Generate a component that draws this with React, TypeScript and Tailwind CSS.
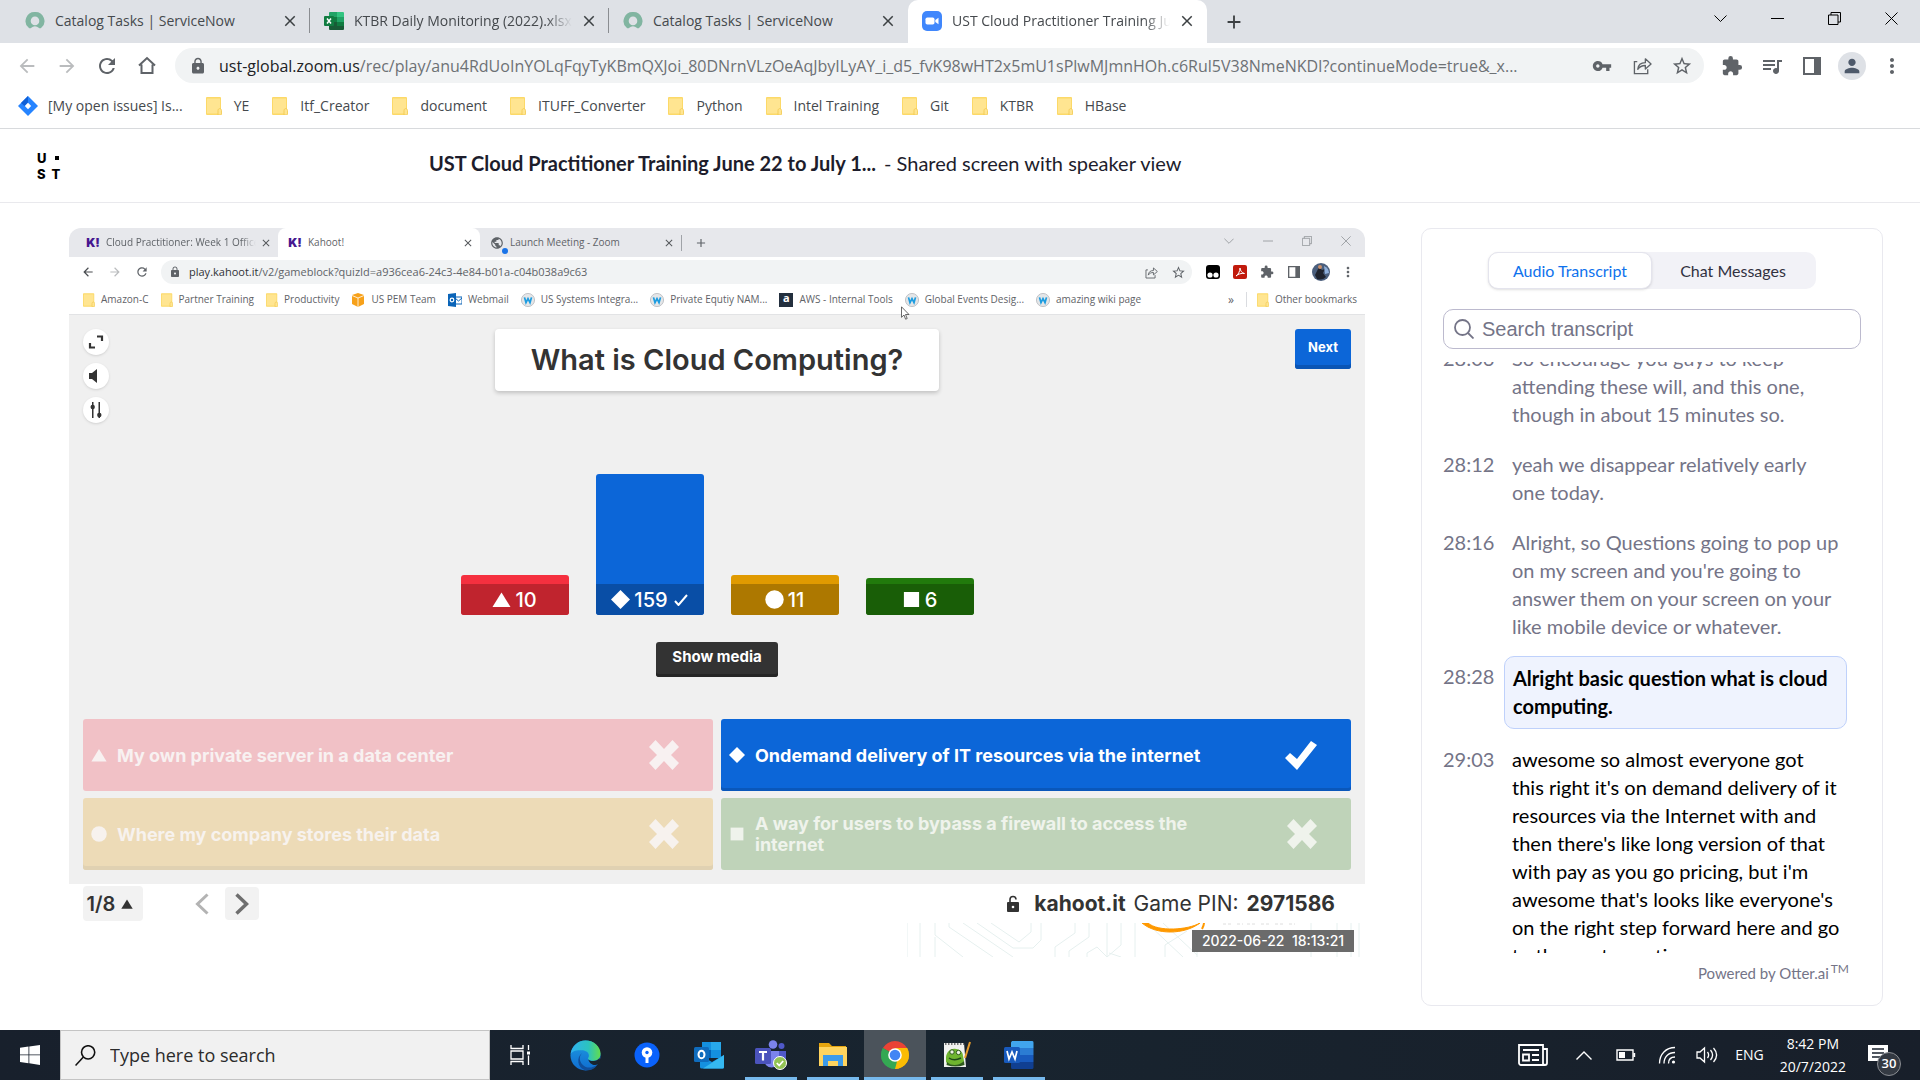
import React from "react";
import {
  MdVpnKey, MdExtension, MdQueueMusic, MdLock, MdPerson, MdMoreVert, MdRefresh,
  MdStarBorder, MdArrowBack, MdArrowForward, MdPublic, MdClose, MdAdd,
} from "react-icons/md";

const ui = "font-['Open_Sans','Noto_Sans',sans-serif]";
const round = "font-['Inter',sans-serif]";

function ServiceNow() {
  return (
    <svg viewBox="0 0 20 20" className="size-5 shrink-0">
      <path d="M10 1a9 9 0 0 0-6.300 15.800c.8.8 1.800.7 2.600 0a5.200 5.200 0 0 1 7.400 0c.8.7 1.800.800 2.600 0A9 9 0 0 0 10 1Zm0 13.200a4.300 4.300 0 1 1 0-8.600 4.300 4.300 0 0 1 0 8.600Z" fill="#81b5a1" />
    </svg>
  );
}

function Excel() {
  return (
    <svg viewBox="0 0 20 20" className="size-5 shrink-0">
      <path d="M6 1h7v9H5V2a1 1 0 0 1 1-1Z" fill="#21a366" />
      <path d="M13 1h6a1 1 0 0 1 1 1v4h-7Z" fill="#33c481" />
      <path d="M5 6h8v5H5Z" fill="#107c41" />
      <path d="M13 6h7v5h-7Z" fill="#21a366" />
      <path d="M5 11h15v7a1 1 0 0 1-1 1H6a1 1 0 0 1-1-1Z" fill="#185c37" />
      <path d="M13 11h7v4h-7Z" fill="#107c41" />
      <rect y="5" width="10" height="10" rx="1" fill="#107c41" />
      <path d="m3 7.500 4 5m0-5-4 5" stroke="#fff" strokeWidth="1.500" />
    </svg>
  );
}

function ZoomLogo() {
  return (
    <svg viewBox="0 0 20 20" className="size-5 shrink-0">
      <rect width="20" height="20" rx="5" fill="#4087fc" />
      <rect x="3.500" y="6.500" width="9" height="7" rx="1.800" fill="#fff" />
      <path d="m13.300 9 3.200-2.300v6.600L13.300 11Z" fill="#fff" />
    </svg>
  );
}

function Folder({ small = false }: { small?: boolean }) {
  return (
    <svg viewBox="0 0 16 18" className={small ? "h-3.5 w-3 shrink-0" : "h-[18px] w-4 shrink-0"}>
      <rect width="15" height="18" rx="1" fill="#fcd968" />
      <path d="M1 1.500h13v15H1Z" fill="#ffe591" />
      <path d="M12 18v-4.500c0-2.500 3.500-2.500 3.500 0V17c0 .6-.4 1-1 1Z" fill="#ffe591" stroke="#f1c84b" strokeWidth=".8" />
    </svg>
  );
}

function ShareIcon({ className }: { className: string }) {
  return (
    <svg viewBox="0 0 20 20" className={className} fill="none" stroke="currentColor" strokeWidth="1.400">
      <path d="M4.500 6H1.500v12.500h14V14" />
      <path d="M5 14c.4-4.500 3-7 8-7V3l6 5.500-6 5.200V10c-3.500 0-6 1-8 4Z" strokeLinejoin="round" />
    </svg>
  );
}

function SidePanel({ className }: { className: string }) {
  return (
    <svg viewBox="0 0 18 18" className={className}>
      <path d="M1 1h16v16H1Z" fill="none" stroke="currentColor" strokeWidth="2" />
      <path d="M11 1h6v16h-6Z" fill="currentColor" />
    </svg>
  );
}

function WinControls({ small = false }: { small?: boolean }) {
  const btn = small ? "flex h-[26px] w-[39px] items-center justify-center" : "flex h-9 w-[57px] items-center justify-center";
  const size = small ? "size-2.5" : "size-[13px]";
  const p = { className: size, viewBox: "0 0 13 13", fill: "none", stroke: "currentColor" };
  return (
    <div className={small ? "ml-auto flex text-[#8b8e93]" : "ml-auto flex text-black"}>
      <button aria-label="Search tabs" className={btn}><svg {...p}><path d="m.5 3.500 6 6 6-6" /></svg></button>
      <button aria-label="Minimize" className={btn}><svg {...p}><path d="M0 6.500h13" /></svg></button>
      <button aria-label="Restore" className={btn}><svg {...p}><path d="M.5 3h9.500v9.500H.5ZM3 3V.5h9.500V10H10" /></svg></button>
      <button aria-label="Close" className={btn}><svg {...p}><path d="m.5.5 12 12m0-12-12 12" /></svg></button>
    </div>
  );
}

function Tab({ icon, title, fade, active, divider }: { icon: React.ReactNode; title: string; fade?: boolean; active?: boolean; divider?: boolean }) {
  return (
    <div className={active ? "flex w-[299px] items-center rounded-t-[10px] bg-white pb-0.5 pl-3.5" : "flex w-[299px] items-center pb-0.5 pl-3.5"}>
      {icon}
      <button className={fade
        ? "ml-2.5 w-[218px] overflow-hidden whitespace-nowrap text-left [mask-image:linear-gradient(to_right,black_88%,transparent)]"
        : "ml-2.5 w-[218px] overflow-hidden whitespace-nowrap text-left"}>{title}</button>
      <button aria-label={"Close " + title} className="ml-2"><MdClose className="size-[18px] text-[#3c4043]" /></button>
      {divider && <span className="ml-auto h-[25px] w-px bg-[#8a8d91]" />}
    </div>
  );
}

const bookmarks = ["YE", "Itf_Creator", "document", "ITUFF_Converter", "Python", "Intel Training", "Git", "KTBR", "HBase"];

const cell = "flex w-10 shrink-0 items-center justify-center";

function Browser() {
  return (
    <header className={"shrink-0 " + ui}>
      <div className="flex h-[43px] bg-[#dee1e6] pl-[11px] text-sm text-[#45494d]">
        <Tab icon={<ServiceNow />} title="Catalog Tasks | ServiceNow" divider />
        <Tab icon={<Excel />} title="KTBR Daily Monitoring (2022).xlsx" fade divider />
        <Tab icon={<ServiceNow />} title="Catalog Tasks | ServiceNow" />
        <Tab icon={<ZoomLogo />} title="UST Cloud Practitioner Training June" fade active />
        <button aria-label="New tab" className="ml-4"><MdAdd className="size-[22px] text-[#3c4043]" /></button>
        <WinControls />
      </div>
      <div className="flex h-[45px] items-center bg-white pr-2 pl-[7px] text-[#5f6368]">
        <button aria-label="Back" className={cell}><MdArrowBack className="size-[22px] text-[#babcbe]" /></button>
        <button aria-label="Forward" className={cell}><MdArrowForward className="size-[22px] text-[#babcbe]" /></button>
        <button aria-label="Reload" className={cell}><MdRefresh className="size-6" /></button>
        <button aria-label="Home" className={cell}>
          <svg viewBox="0 0 20 20" className="size-5" fill="none" stroke="currentColor" strokeWidth="2"><path d="M2 9.500 10 2l8 7.500M4.500 8.500V17h11V8.500" /></svg>
        </button>
        <div className="ml-2 flex h-[35px] min-w-0 flex-1 items-center rounded-full bg-[#f1f3f4] pr-0.5 pl-3.5">
          <MdLock className="size-[18px] shrink-0" />
          <div className="ml-3 min-w-0 flex-1 truncate text-base text-[#6d7175]">
            <span className="text-[#202124]">ust-global.zoom.us</span>/rec/play/anu4RdUoInYOLqFqyTyKBmQXJoi_80DNrnVLzOeAqJbyILyAY_i_d5_fvK98wHT2x5mU1sPlwMJmnHOh.c6Rul5V38NmeNKDI?continueMode=true&amp;_x...
          </div>
          <button aria-label="Passwords" className={cell}><MdVpnKey className="size-5" /></button>
          <button aria-label="Share" className={cell}><ShareIcon className="size-[19px]" /></button>
          <button aria-label="Bookmark" className={cell}><MdStarBorder className="size-[22px]" /></button>
        </div>
        <div className="ml-2 flex items-center">
          <button aria-label="Extensions" className={cell}><MdExtension className="size-[22px]" /></button>
          <button aria-label="Media" className={cell}><MdQueueMusic className="size-6" /></button>
          <button aria-label="Side panel" className={cell}><SidePanel className="size-[18px]" /></button>
          <button aria-label="Profile" className={cell}><span className="flex size-7 items-center justify-center rounded-full bg-[#dee1e6]"><MdPerson className="size-[22px] text-[#4e5a6b]" /></span></button>
          <button aria-label="Menu" className={cell}><MdMoreVert className="size-6" /></button>
        </div>
      </div>
      <nav className="flex h-[41px] items-center gap-[23px] border-b border-[#d8dadd] bg-white pb-1 pl-[18px] text-sm text-[#45494d]">
        <a href="#jira" className="flex items-center gap-2.5 whitespace-nowrap">
          <svg viewBox="0 0 20 20" className="size-5"><path d="M10 0 20 10 10 20 0 10Z" fill="#2684ff" /><path d="M10 0v6.500L6.500 10 3 7Z" fill="#0f5fd6" /><path d="M10 6.800 13.200 10 10 13.200 6.800 10Z" fill="#fff" /></svg>
          [My open issues] Is...
        </a>
        {bookmarks.map((b) => (
          <a key={b} href={"#" + b} className="flex items-center gap-3 whitespace-nowrap"><Folder />{b}</a>
        ))}
      </nav>
    </header>
  );
}

function KahootMark() {
  return <span className="w-3.5 text-center font-['Inter'] text-xs font-black text-[#46178f]">K!</span>;
}

function SmallTab({ icon, title, active, fade, divider }: { icon: React.ReactNode; title: string; active?: boolean; fade?: boolean; divider?: boolean }) {
  return (
    <div className={active ? "flex w-[202px] items-center rounded-t-lg bg-white pl-2.5" : "flex w-[202px] items-center pl-2.5"}>
      {icon}
      <button className={fade
        ? "ml-1.5 flex-1 overflow-hidden whitespace-nowrap text-left [mask-image:linear-gradient(to_right,black_90%,transparent)]"
        : "ml-1.5 flex-1 overflow-hidden whitespace-nowrap text-left"}>{title}</button>
      <button aria-label={"Close " + title} className="ml-1 mr-1.5"><MdClose className="size-3 text-[#55585c]" /></button>
      {divider && <span className="h-4 w-px bg-[#a0a3a8]" />}
    </div>
  );
}

function Wiki() {
  return (
    <svg viewBox="0 0 16 16" className="size-3.5 shrink-0">
      <circle cx="8" cy="8" r="7.500" fill="#e4e6e8" stroke="#b9bcc0" />
      <path d="m4 5 1.700 6L8 6.500l2.300 4.500L12 5" fill="none" stroke="#1c9ce0" strokeWidth="2" />
    </svg>
  );
}

const smallBookmarks: { label: string; icon: React.ReactNode }[] = [
  { label: "Amazon-C", icon: <Folder small /> },
  { label: "Partner Training", icon: <Folder small /> },
  { label: "Productivity", icon: <Folder small /> },
  { label: "US PEM Team", icon: <svg viewBox="0 0 14 14" className="size-3.5"><path d="m7 0 6 2v9l-6 3-6-3V2Z" fill="#f7a11a" /><path d="M1 2.500 7 5l6-2.500M7 5v9" stroke="#fff" strokeWidth=".8" fill="none" /></svg> },
  { label: "Webmail", icon: <svg viewBox="0 0 14 14" className="size-3.5"><path d="M7 4h7v7H7Z" fill="#fff" stroke="#0a64b8" /><path d="m7 5 3.500 3L14 5" stroke="#0a64b8" fill="none" /><path d="m0 1 8-1v14l-8-1Z" fill="#0a64b8" /><circle cx="4" cy="7" r="1.800" fill="none" stroke="#fff" strokeWidth="1.200" /></svg> },
  { label: "US Systems Integra...", icon: <Wiki /> },
  { label: "Private Equtiy NAM...", icon: <Wiki /> },
  { label: "AWS - Internal Tools", icon: <span className="flex size-3.5 items-center justify-center bg-[#232f3e] pb-0.5 text-[11px] font-bold text-white">a</span> },
  { label: "Global Events Desig...", icon: <Wiki /> },
  { label: "amazing wiki page", icon: <Wiki /> },
];

const smallCell = "flex w-[27px] shrink-0 items-center justify-center";

function SharedBrowser() {
  return (
    <div className={ui + " text-[#5f6368]"}>
      <div className="flex h-[29px] rounded-t-xl bg-[#e7e8ec] pl-[7px] text-[10px]">
        <SmallTab icon={<KahootMark />} title="Cloud Practitioner: Week 1 Office" fade />
        <SmallTab icon={<KahootMark />} title="Kahoot!" active />
        <SmallTab icon={<span className="relative"><MdPublic className="size-3.5" /><span className="absolute -right-1 -bottom-1 size-1.5 rounded-full bg-[#1a73e8]" /></span>} title="Launch Meeting - Zoom" divider />
        <button aria-label="New tab" className="ml-3"><MdAdd className="size-3.5" /></button>
        <WinControls small />
      </div>
      <div className="flex h-[30px] items-center bg-white pr-1 pl-[5px]">
        <button aria-label="Back" className={smallCell}><MdArrowBack className="size-3.5 text-[#4a4d51]" /></button>
        <button aria-label="Forward" className={smallCell}><MdArrowForward className="size-3.5 text-[#babcbe]" /></button>
        <button aria-label="Reload" className={smallCell}><MdRefresh className="size-3.5" /></button>
        <div className="ml-1.5 flex h-6 min-w-0 flex-1 items-center rounded-full bg-[#f1f3f4] pl-2">
          <MdLock className="size-3" />
          <span className="ml-2 text-[11px]"><span className="text-[#303236]">play.kahoot.it</span>/v2/gameblock?quizId=a936cea6-24c3-4e84-b01a-c04b038a9c63</span>
          <button aria-label="Share" className={"ml-auto " + smallCell}><ShareIcon className="size-[13px]" /></button>
          <button aria-label="Bookmark" className={smallCell}><MdStarBorder className="size-[15px]" /></button>
        </div>
        <div className="ml-[7px] flex items-center">
          <span className={smallCell}><svg viewBox="0 0 14 14" className="size-3.5"><rect width="14" height="14" rx="3" fill="#000" /><circle cx="4" cy="10" r="2.600" fill="#fff" /><circle cx="10" cy="10" r="2.600" fill="#fff" /></svg></span>
          <span className={smallCell}><svg viewBox="0 0 14 14" className="size-3.5"><rect width="14" height="14" rx="2" fill="#c11a0c" /><path d="M3 11c2-1 4-4.500 4-8 .3 3 2 5 4.500 5.500C8.500 8 5 9 3 11Z" fill="none" stroke="#fff" /></svg></span>
          <span className={smallCell}><MdExtension className="size-3.5" /></span>
          <span className={smallCell}><SidePanel className="size-3" /></span>
          <span className={smallCell}><svg viewBox="0 0 18 18" className="size-[18px]"><circle cx="9" cy="9" r="9" fill="#4b5f7d" /><path d="M3 12 7 4l3 3 3-1-2 4 3 4a9 9 0 0 1-9 2Z" fill="#20242e" /><circle cx="8" cy="4" r="2" fill="#c98f6b" /><path d="M12 3a8 8 0 0 1 5 7l-4 1Z" fill="#8fb0dc" /></svg></span>
          <span className={smallCell}><MdMoreVert className="size-4" /></span>
        </div>
      </div>
      <nav className="flex h-7 items-center gap-3 border-b border-[#e2e3e5] bg-white px-3.5 pb-0.5 text-[10px]">
        {smallBookmarks.map((b) => (
          <a key={b.label} href="#bookmark" className="flex items-center gap-1.5 whitespace-nowrap">{b.icon}{b.label}</a>
        ))}
        <span className="ml-auto text-xs">»</span>
        <a href="#other" className="-mr-1.5 flex items-center gap-1.5 border-l border-[#dadce0] pl-2.5"><Folder small />Other bookmarks</a>
      </nav>
    </div>
  );
}

type Shape = "triangle" | "diamond" | "circle" | "square";

function ShapeIcon({ shape, className }: { shape: Shape; className: string }) {
  return (
    <svg viewBox="0 0 20 20" className={className} fill="currentColor">
      {shape === "triangle" && <path d="M10 2.500 19.500 18H.5Z" />}
      {shape === "diamond" && <path d="M10 0 20 10 10 20 0 10Z" />}
      {shape === "circle" && <circle cx="10" cy="10" r="9.700" />}
      {shape === "square" && <path d="M2 2h16v16H2Z" />}
    </svg>
  );
}

const bars: { shape: Shape; n: number; box: string; foot: string; ok?: boolean }[] = [
  { shape: "triangle", n: 10, box: "h-10 bg-[#f5303f]", foot: "bg-[#c0242e]" },
  { shape: "diamond", n: 159, box: "h-[141px] bg-[#0c66d8]", foot: "bg-[#094ea6]", ok: true },
  { shape: "circle", n: 11, box: "h-10 bg-[#e09a00]", foot: "bg-[#ad7800]" },
  { shape: "square", n: 6, box: "h-[37px] bg-[#217a0c]", foot: "bg-[#195e07]" },
];

const answers: { shape: Shape; text: string; cls: string; ok?: boolean }[] = [
  { shape: "triangle", text: "My own private server in a data center", cls: "bg-[#f1c1c6] text-[#f8f1f1]" },
  { shape: "diamond", text: "Ondemand delivery of IT resources via the internet", cls: "bg-[#0c66d8] text-white shadow-[inset_0_-3px_0_#0a57ba]", ok: true },
  { shape: "circle", text: "Where my company stores their data", cls: "bg-[#eddbb7] text-[#f7f2ee] shadow-[inset_0_-4px_0_#e0d1b2]" },
  { shape: "square", text: "A way for users to bypass a firewall to access the internet", cls: "bg-[#bfd3b9] text-[#eff3ec]" },
];

function Quiz() {
  const round26 = "flex size-[26px] items-center justify-center rounded-full bg-white text-[#333] shadow-sm";
  return (
    <section className={"bg-[#f0f0f0] p-3.5 " + round}>
      <div className="grid grid-cols-[1fr_auto_1fr] items-start">
        <div className="flex flex-col gap-2">
          <button aria-label="Full screen" className={round26}><svg viewBox="0 0 16 16" className="size-4" fill="none" stroke="currentColor" strokeWidth="2.200"><path d="M9 2.500h5V7M7 13.500H2V9" /></svg></button>
          <button aria-label="Sound" className={round26}><svg viewBox="0 0 16 16" className="size-4" fill="currentColor"><path d="M1 5h3l5-4v14l-5-4H1Z" /></svg></button>
          <button aria-label="Settings" className={round26}><svg viewBox="0 0 16 16" className="size-4" fill="currentColor"><path d="M4 0h1.500v16H4ZM10.500 0H12v16h-1.500Z" /><circle cx="4.700" cy="5" r="2.200" /><circle cx="11.300" cy="13" r="2.200" /></svg></button>
        </div>
        <h1 className="flex h-[62px] items-center rounded-sm bg-white px-9 text-[29px] font-semibold text-[#333] shadow-[0_2px_4px_rgba(0,0,0,0.2)]">What is Cloud Computing?</h1>
        <button className="h-10 w-14 justify-self-end rounded-[3px] bg-[#0c66d8] pb-0.5 text-[13px] font-bold text-white shadow-[inset_0_-4px_0_#0a55b5]">Next</button>
      </div>
      <div className="flex h-48 items-end justify-center gap-[27px]">
        {bars.map((b) => (
          <div key={b.n} className={"flex w-[108px] flex-col justify-end overflow-hidden rounded-[3px] " + b.box}>
            <div className={"flex h-[31px] items-center justify-center gap-1 text-xl font-medium text-white " + b.foot}>
              <ShapeIcon shape={b.shape} className="size-[19px]" />{b.n}
              {b.ok && <svg viewBox="0 0 14 12" className="ml-0.5 h-3 w-3.5" fill="none" stroke="currentColor" strokeWidth="2"><path d="m1 7 3.500 4L13 1" /></svg>}
            </div>
          </div>
        ))}
      </div>
      <div className="mt-[27px] flex justify-center">
        <button className="h-[35px] w-[122px] rounded-[3px] bg-[#333] pb-1 text-[15px] font-bold text-white shadow-[inset_0_-3px_0_#262626]">Show media</button>
      </div>
      <div className="mt-[42px] grid grid-cols-2 gap-x-2 gap-y-[7px]">
        {answers.map((a) => (
          <button key={a.shape} className={"flex h-[72px] items-center rounded-[3px] pl-2 pr-[34px] text-left text-[18px] leading-[21px] font-bold " + a.cls}>
            <ShapeIcon shape={a.shape} className="size-4 shrink-0" />
            <span className="ml-2.5 flex-1 pr-14">{a.text}</span>
            {a.ok ? (
              <svg viewBox="0 0 32 30" className="h-[30px] w-8 shrink-0" fill="currentColor"><path d="m0 18 5-5 7 6L26 1l6 4-20 25Z" /></svg>
            ) : (
              <svg viewBox="0 0 30 30" className="size-[30px] shrink-0" fill="currentColor"><path d="m6.500 0 8.500 9L23.500 0 30 7l-8 8 8 8-6.500 7-8.500-9-8.500 9L0 23l8-8-8-8Z" /></svg>
            )}
          </button>
        ))}
      </div>
    </section>
  );
}

function QuizFooter() {
  return (
    <div className={"flex h-[39px] items-center bg-white px-3.5 text-[21px] text-[#333] " + round}>
      <button className="flex h-[35px] w-[60px] items-center justify-center gap-1.5 rounded-sm bg-[#f2f2f2] pr-1.5 text-xl font-semibold">1/8<ShapeIcon shape="triangle" className="size-3 shrink-0" /></button>
      <button aria-label="Previous" className="ml-[52px] text-[#b3b3b3]"><svg viewBox="0 0 14 22" className="h-[22px] w-3.5" fill="none" stroke="currentColor" strokeWidth="3"><path d="M12.500 1.500 2.500 11l10 9.500" /></svg></button>
      <button aria-label="Following" className="ml-4 flex h-[33px] w-[34px] items-center justify-center rounded-sm bg-[#f2f2f2] text-[#6e6e6e]"><svg viewBox="0 0 14 22" className="h-[22px] w-3.5" fill="none" stroke="currentColor" strokeWidth="3.500"><path d="m1.500 1.500 10 9.500-10 9.500" /></svg></button>
      <p className="mr-4 ml-auto flex items-center">
        <svg viewBox="0 0 12 17" className="mr-[15px] h-[17px] w-3"><path d="M3 8V4.500a3 3 0 0 1 6 0" fill="none" stroke="#333" strokeWidth="1.600" /><rect y="7" width="12" height="10" rx="1" fill="#333" /><circle cx="6" cy="12" r="1.300" fill="#fff" /></svg>
        <b className="font-bold">kahoot.it</b><span className="mx-2">Game PIN:</span><b className="font-bold">2971586</b>
      </p>
    </div>
  );
}

function SlideStrip() {
  return (
    <div className="relative flex h-[34px] justify-end overflow-hidden bg-white">
      <svg viewBox="0 0 458 34" className="h-[34px] w-[458px]" fill="none" stroke="#e6f0ef">
        <path d="M0 0v34M13 0v34M28 0v12l28 22M28 14v20M42 0v4l44 30M56 0l50 34M70 0l36 25h20l8-8V0M84 0l28 19 12-10V0M148 34V24l20-14V0M162 34v-6l20-14V0M180 34v-4l10-6 10 10M200 0v34M214 0v22l-14 12M228 0v34M202 30l12 4M240 0l36 34M256 0l34 32M258 34V22l22-14M290 34V20l16-12M404 34V0M430 0v34M444 0v34M452 0v34" />
        <path d="M235 0c14 12 42 12 58 0-12 7-42 9-52 0Z" fill="#f90" stroke="#f90" />
        <path d="M297 0c0 2-1 4-2 6" stroke="#f90" strokeWidth="2" />
        <path d="M316 1h10m4 0h6m4 0h8m6 0h9m5 0h8m6 0h6" stroke="#dedede" strokeDasharray="3 2" />
      </svg>
      <time className={"absolute top-[7px] right-[11px] flex h-[22px] w-[162px] items-center justify-center bg-[#6b6b6b] text-sm font-medium whitespace-pre text-white " + round}>2022-06-22  18:13:21</time>
    </div>
  );
}

const transcript = [
  { t: "28:06", text: "So encourage you guys to keep attending these will, and this one, though in about 15 minutes so.", kind: "past" },
  { t: "28:12", text: "yeah we disappear relatively early one today.", kind: "past" },
  { t: "28:16", text: "Alright, so Questions going to pop up on my screen and you're going to answer them on your screen on your like mobile device or whatever.", kind: "past" },
  { t: "28:28", text: "Alright basic question what is cloud computing.", kind: "now" },
  { t: "29:03", text: "awesome so almost everyone got this right it's on demand delivery of it resources via the Internet with and then there's like long version of that with pay as you go pricing, but i'm awesome that's looks like everyone's on the right step forward here and go to the next question.", kind: "next" },
];

function Transcript() {
  return (
    <aside className="flex w-[462px] shrink-0 flex-col rounded-[10px] border border-[#e9e9ef] px-[21px] pt-[23px] pb-[18px]">
      <div className="flex h-[37px] w-[328px] self-center rounded-[10px] bg-[#f2f2f7] pr-0.5 text-base text-[#31313f]">
        <button className="w-[164px] rounded-[10px] border border-[#e4e4ed] bg-white text-[#0e72ed] shadow-sm">Audio Transcript</button>
        <button className="flex-1">Chat Messages</button>
      </div>
      <label className="mt-5 flex h-10 shrink-0 items-center rounded-[10px] border border-[#bcbace] px-2.5">
        <svg viewBox="0 0 20 20" className="size-5 shrink-0" fill="none" stroke="#747487" strokeWidth="1.800"><circle cx="8.500" cy="8.500" r="7.500" /><path d="m14 14 5.500 5.500" /></svg>
        <input aria-label="Search transcript" placeholder="Search transcript" className="ml-2 w-full bg-transparent font-['Liberation_Sans',sans-serif] text-xl outline-none placeholder:text-[#747487]" />
      </label>
      <div className="mt-[13px] min-h-0 flex-1 overflow-hidden">
        <ul className="-mt-[18px] flex flex-col gap-[22px] text-xl leading-7 text-[#747487]">
          {transcript.map((r) => (
            <li key={r.t} className="flex items-start">
              <time className="w-[61px] shrink-0">{r.t}</time>
              {r.kind === "now" ? (
                <p className="-my-1.5 w-[343px] rounded-[10px] border border-[#bfd1fb] bg-[#eff3fe] px-2 pt-[7px] pb-2 font-bold text-black">{r.text}</p>
              ) : (
                <p className={r.kind === "past" ? "ml-2 w-[328px]" : "ml-2 w-[328px] text-black"}>{r.text}</p>
              )}
            </li>
          ))}
        </ul>
      </div>
      <p className="mt-2 mr-3 mb-0.5 text-right text-[15px] leading-6 text-[#747487]">Powered by Otter.ai<sup className="ml-0.5 text-xs">TM</sup></p>
    </aside>
  );
}

function TaskButton({ label, width, run, active, children }: { label: string; width: string; run?: boolean; active?: boolean; children: React.ReactNode }) {
  return (
    <button aria-label={label} className={"relative flex h-full items-center justify-center " + width + (active ? " bg-[#4b535b]" : "")}>
      {children}
      {run && <span className={"absolute bottom-0 h-[3px] bg-[#76b9ed] " + (active ? "inset-x-0" : "inset-x-[5px]")} />}
    </button>
  );
}

function Taskbar() {
  return (
    <footer className={"flex h-[50px] shrink-0 items-center bg-linear-to-r from-[#18202c] via-[#18242f] to-[#181f2a] text-white " + ui}>
      <button aria-label="Start" className="flex h-full w-[60px] items-center justify-center">
        <svg viewBox="0 0 20 20" className="size-5" fill="#fff"><path d="M0 2.800 8.500 1.600v7.900H0ZM9.300 1.500 20 0v9.500H9.300ZM0 10.300h8.500v7.900L0 17ZM9.300 10.300H20V20L9.300 18.300Z" /></svg>
      </button>
      <label className="flex h-full w-[430px] items-center border border-[#c4c4c4] bg-[#f1f1f1] px-3.5">
        <svg viewBox="0 0 20 20" className="size-[21px] shrink-0" fill="none" stroke="#111" strokeWidth="1.500"><circle cx="12.500" cy="7" r="6.300" /><path d="M8 11.500.5 19.500" /></svg>
        <input aria-label="Type here to search" placeholder="Type here to search" className="ml-3.5 w-full bg-transparent text-[18px] outline-none placeholder:text-[#2b2b2b]" />
      </label>
      <TaskButton label="Task view" width="w-16 pr-1">
        <svg viewBox="0 0 20 20" className="size-5" fill="none" stroke="#fff" strokeWidth="1.300"><path d="M1 0v3.500h12V0M1 20v-3.500h12V20M1 6h12v8H1ZM18.500 0v5M18.500 10.500V20" /><path d="M17 6.500h3v3h-3Z" fill="#fff" stroke="none" /></svg>
      </TaskButton>
      <TaskButton label="Edge" width="w-[62px]">
        <svg viewBox="0 0 32 32" className="size-[31px]">
          <defs>
            <linearGradient id="e1" x1="0" x2="1"><stop stopColor="#2fb1f0" /><stop offset=".6" stopColor="#2cc3bd" /><stop offset="1" stopColor="#63dd4c" /></linearGradient>
            <linearGradient id="e2" x1="0" y1="0" x2="0" y2="1"><stop stopColor="#1f9be0" /><stop offset="1" stopColor="#0f6cd0" /></linearGradient>
          </defs>
          <circle cx="16" cy="16" r="15.500" fill="url(#e2)" />
          <path d="M.8 14C2 6 8.500.5 16 .5 25 .5 31.500 7 31.500 14c0 5-3.500 7.500-7.500 7.500-3.500 0-5.500-1.200-5.500-2.300 0-.8 1-1.200 1-3.200 0-3-3-5.500-7.500-5.500C7 10.500 3 11 .8 14Z" fill="url(#e1)" />
          <path d="M12.500 13.500c-3 3-3.500 8 .5 12 4 4 10 4 15.500-.5C25 31 19 32 15 31 8 29 6 18 12.500 13.500Z" fill="#104f9c" />
          <path d="M18.500 19c0 1.500 2 2.700 5.500 2.700 3 0 5-1 6.500-3L32 26l-3-1c-4 2-9 0-10.500-6Z" fill="#18242f" />
        </svg>
      </TaskButton>
      <TaskButton label="Maps" width="w-[62px]">
        <svg viewBox="0 0 26 26" className="size-[26px]"><circle cx="13" cy="13" r="12.500" fill="#0a62fb" /><circle cx="13" cy="10.500" r="5.300" fill="#fff" /><path d="M11.500 14h3v7h-3Z" fill="#fff" /><circle cx="13" cy="10.500" r="1.700" fill="#0a62fb" /></svg>
      </TaskButton>
      <TaskButton label="Outlook" width="w-[62px]">
        <svg viewBox="0 0 30 28" className="h-7 w-[30px]"><path d="M8 1h19v16H8Z" fill="#1490df" /><path d="M17 1h10v8H17Z" fill="#28a8ea" /><path d="M8 9h9v8H8Z" fill="#0364b8" /><path d="M6 14 18 21l12-7v12a1.500 1.500 0 0 1-1.500 1.500h-21A1.500 1.500 0 0 1 6 26Z" fill="#1490df" /><path d="M30 14 9 27.500h19.500A1.500 1.500 0 0 0 30 26Z" fill="#35b8f1" /><rect y="6" width="15" height="15" rx="1.500" fill="#0f6cbd" /><ellipse cx="7.500" cy="13.500" rx="3" ry="3.700" fill="none" stroke="#fff" strokeWidth="2" /></svg>
      </TaskButton>
      <TaskButton label="Teams" width="w-[62px]" run>
        <svg viewBox="0 0 32 30" className="h-[30px] w-8"><circle cx="18" cy="4.500" r="4.300" fill="#7b83eb" /><circle cx="26.500" cy="6" r="3" fill="#5059c9" /><path d="M22 11h9v8a5 5 0 0 1-9 2Z" fill="#5059c9" /><path d="M9 11h15v9a7.500 7.500 0 0 1-15 0Z" fill="#7b83eb" /><rect y="8" width="16" height="16" rx="1.500" fill="#4b53bc" /><path d="M4 12h8M8 12v8.500" stroke="#fff" strokeWidth="2.200" /><circle cx="25" cy="23" r="6.500" fill="#92c353" stroke="#fff" /><path d="m21.800 23 2.400 2.500 4-4.500" fill="none" stroke="#fff" strokeWidth="1.800" /></svg>
      </TaskButton>
      <TaskButton label="File Explorer" width="w-[62px]" run>
        <svg viewBox="0 0 28 24" className="h-6 w-7"><path d="M0 0h10l3 3h14v20H0Z" fill="#e6a50e" /><path d="M0 4h28v19H0Z" fill="#ffd45e" /><path d="M4 12h20v11h-5v-5H9v5H4Z" fill="#3d9be9" /></svg>
      </TaskButton>
      <TaskButton label="Chrome" width="w-[62px]" run active>
        <svg viewBox="0 0 28 28" className="size-7"><path d="M14 14 1.900 7A14 14 0 0 1 26.100 7Z" fill="#ea4335" /><path d="M14 14 26.100 7A14 14 0 0 1 14 28Z" fill="#fbbc04" /><path d="M14 14v14A14 14 0 0 1 1.900 7Z" fill="#34a853" /><path d="M14 7h12.100A14 14 0 0 1 14 28l6-10.500Z" fill="#fbbc04" /><path d="M1.900 7 8 17.500l8 3L14 28A14 14 0 0 1 1.900 7Z" fill="#34a853" /><circle cx="14" cy="14" r="6.800" fill="#fff" /><circle cx="14" cy="14" r="5.300" fill="#4285f4" /></svg>
      </TaskButton>
      <TaskButton label="Notepad++" width="w-[62px]" run>
        <svg viewBox="0 0 28 28" className="size-7"><path d="M1 2h20l2 24H1Z" fill="#f2f3f1" /><path d="M2 3h19" stroke="#777" strokeWidth="2" strokeDasharray="1.500 1.500" /><path d="M3 16c1-6 5-9 10-8 4 .5 7 3 7 7l1 5c-2 5-14 6-18 1Z" fill="#6fb52f" /><path d="M4 21c4 4 12 4 17-1l.5 4c-6 2-12 2-18 0Z" fill="#2e5a1c" /><circle cx="9" cy="11" r="2.200" fill="#eef5e4" stroke="#2e5a1c" /><circle cx="15.500" cy="11.500" r="2.200" fill="#eef5e4" stroke="#2e5a1c" /><path d="M6 17c3 2 8 2 12 0" stroke="#1f4a1a" strokeWidth="1.500" fill="none" /><path d="m27 1-5 16" stroke="#e59b2b" strokeWidth="2" /></svg>
      </TaskButton>
      <TaskButton label="Word" width="w-[62px]" run>
        <svg viewBox="0 0 30 28" className="h-7 w-[30px]"><path d="M8 0h20a1.500 1.500 0 0 1 1.500 1.500V7H7V1.500Z" fill="#41a5ee" /><path d="M7 7h22.500v7H7Z" fill="#2b7cd3" /><path d="M7 14h22.500v7H7Z" fill="#185abd" /><path d="M7 21h22.500v5.500A1.500 1.500 0 0 1 28 28H8.500A1.500 1.500 0 0 1 7 26.500Z" fill="#103f91" /><rect y="6" width="16" height="16" rx="1.500" fill="#185abd" /><path d="m3 10 2 8 3-7 3 7 2-8" fill="none" stroke="#fff" strokeWidth="1.700" /></svg>
      </TaskButton>
      <div className="ml-auto flex h-full items-center">
        <svg viewBox="0 0 30 22" className="h-[22px] w-[30px]" fill="none" stroke="#fff" strokeWidth="1.800"><path d="M1 1h24v20H3a2 2 0 0 1-2-2ZM25 5h4v14a2 2 0 0 1-4 0M5 6h16M5 10.500h6v6H5ZM14 11h7M14 16h7" /></svg>
        <svg viewBox="0 0 16 9" className="ml-7 h-[9px] w-4" fill="none" stroke="#fff" strokeWidth="1.400"><path d="m.5 8.500 7.500-7.500 7.500 7.500" /></svg>
        <svg viewBox="0 0 20 12" className="ml-6 h-3 w-5" fill="none" stroke="#fff" strokeWidth="1.400"><path d="M1 1h16v10H1ZM18.500 4v4" /><path d="M3 3h6v6H3Z" fill="#fff" stroke="none" /></svg>
        <svg viewBox="0 0 18 18" className="ml-[22px] size-[18px]" fill="none" stroke="#fff" strokeWidth="1.300"><path d="M1.500 17.500C1.500 8 8 1.500 17 1.500M6 17.500C6 11 10.500 6.500 17 6.500M10.500 17.500c0-4 2.500-6.500 6.500-6.500" /><circle cx="15.500" cy="16" r="1.600" fill="#fff" stroke="none" /></svg>
        <svg viewBox="0 0 22 18" className="ml-5 h-[18px] w-[22px]" fill="none" stroke="#fff" strokeWidth="1.300"><path d="M1 6h3l4.500-4v14L4 12H1ZM11.500 6c1.500 2 1.500 4 0 6M14.500 4c2.500 3 2.500 7 0 10M17.500 2c4 4.500 4 9.500 0 14" /></svg>
        <span className="ml-[17px] text-sm">ENG</span>
        <time className="ml-4 text-center text-sm leading-[23px]">8:42 PM<br />20/7/2022</time>
        <button aria-label="30 notifications" className="relative mr-[19px] ml-[22px] h-[38px] w-[33px]">
          <svg viewBox="0 0 20 20" className="size-5" fill="#fff"><path d="M0 0h20v16h-5v4l-5-4H0Z" /><path d="M4 4h12M4 8h12M4 12h8" stroke="#18202c" strokeWidth="1.500" /></svg>
          <span className="absolute right-0 bottom-[-2px] flex size-6 items-center justify-center rounded-full border border-[#8a8d92] bg-[#343a43] text-[13px] font-semibold">30</span>
        </button>
      </div>
    </footer>
  );
}

export default function App() {
  return (
    <div className="flex h-screen flex-col overflow-hidden bg-white font-['Lato',sans-serif]">
      <Browser />
      <div className="flex h-[74px] shrink-0 items-center border-b border-[#e9e9ed] text-xl text-[#1d1d2c]">
        <div className={"ml-[37px] grid w-6 grid-cols-2 items-center gap-x-1 text-[13px] leading-4 font-extrabold text-black " + round}>
          <span>U</span><span className="ml-1 size-1 bg-black" /><span>S</span><span className="text-center">T</span>
        </div>
        <p className="ml-[368px] pb-1.5"><b>UST Cloud Practitioner Training June 22 to July 1...</b><span className="ml-2">- Shared screen with speaker view</span></p>
      </div>
      <main className="flex min-h-0 flex-1 gap-14 pt-[25px] pr-[37px] pb-6 pl-[69px]">
        <div className="relative min-w-0 flex-1">
          <SharedBrowser />
          <Quiz />
          <QuizFooter />
          <SlideStrip />
          <svg viewBox="0 0 9 14" className="absolute top-[78px] left-[832px] h-3.5 w-[9px]"><path d="M.5.8v10.500l2.500-2.300 1.600 4.200 1.600-.7-1.700-4h3.500Z" fill="#fff" stroke="#444" strokeWidth=".8" /></svg>
        </div>
        <Transcript />
      </main>
      <Taskbar />
    </div>
  );
}
